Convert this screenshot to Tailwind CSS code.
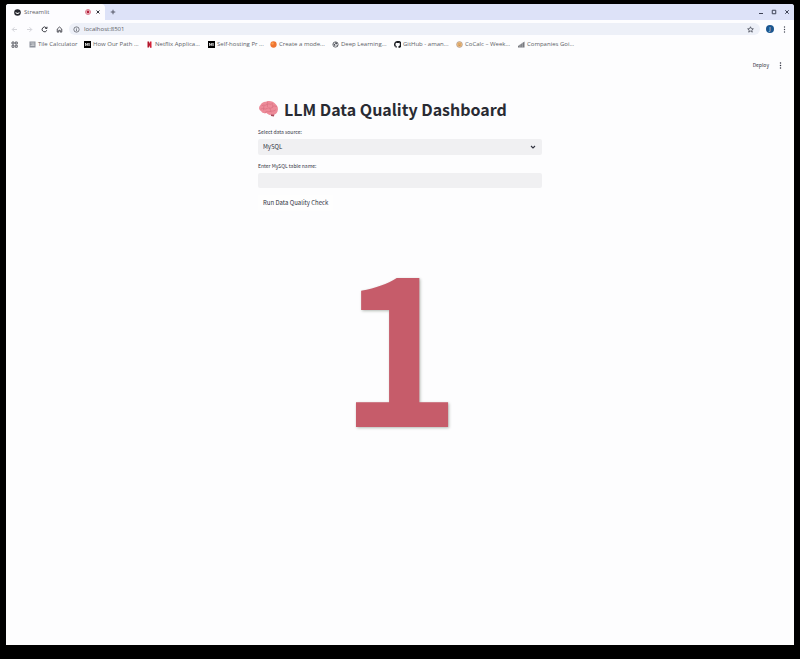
<!DOCTYPE html>
<html lang="en">
<head>
<meta charset="utf-8">
<meta name="viewport" content="width=device-width, initial-scale=1">
<title>Streamlit</title>
<script src="https://cdn.jsdelivr.net/npm/@tailwindcss/browser@4"></script>
</head>
<body class="flex min-h-screen flex-col bg-black px-[6px] pt-1 pb-[14px] font-['Open_Sans','Noto_Sans',sans-serif] text-[6px] leading-[10px] text-[#5c5e66]">
<div class="flex grow flex-col overflow-hidden rounded-t-[3px] bg-[#fdfdfe]">
  <header>
    <div class="flex h-4 items-stretch bg-[#dde2f8]">
      <div class="flex w-[99px] items-center rounded-tr-[4px] bg-[#fdfcff] pr-1 pl-2">
        <svg class="mr-[3px] size-[7px]" viewBox="0 0 14 14"><circle cx="7" cy="7" r="6.600" fill="#25262e"/><path d="M2.500 6.200 7 8l4.500-1.800-1.500 3L7 10 4 9.200z" fill="#fff"/></svg>
        <span class="grow">Streamlit</span>
        <svg class="mr-1 size-[6px]" viewBox="0 0 12 12"><circle cx="6" cy="6" r="5" fill="#fbe3e8" stroke="#d0566c" stroke-width="1.500"/><circle cx="6" cy="6" r="2.800" fill="#b51f3a"/></svg>
        <button aria-label="Close tab"><svg class="size-[6px]" viewBox="0 0 12 12" stroke="#30323a" stroke-width="2"><path d="M3 3l6 6M9 3l-6 6"/></svg></button>
      </div>
      <button class="ml-[5px]" aria-label="New tab"><svg class="size-[6px]" viewBox="0 0 12 12" stroke="#4a4d5c" stroke-width="1.800"><path d="M6 1.500v9M1.500 6h9"/></svg></button>
      <div class="ml-auto flex items-center gap-[7px] pr-1 text-[#3d4254]">
        <button aria-label="Minimize"><svg class="size-[6px]" viewBox="0 0 12 12" stroke="currentColor" stroke-width="2"><path d="M2 9h8"/></svg></button>
        <button aria-label="Maximize"><svg class="size-[6px]" viewBox="0 0 12 12" fill="none" stroke="currentColor" stroke-width="2"><path d="M2.500 2.500h7v7h-7z"/></svg></button>
        <button aria-label="Close"><svg class="size-[6px]" viewBox="0 0 12 12" stroke="currentColor" stroke-width="2"><path d="M2.500 2.500l7 7M9.500 2.500l-7 7"/></svg></button>
      </div>
    </div>
    <div class="flex h-[18px] items-center bg-[#fdfdff] pr-[6px] pl-[5px]">
      <div class="flex gap-2">
        <button aria-label="Back"><svg class="size-[7px]" viewBox="0 0 14 14" fill="none" stroke="#c9cad0" stroke-width="1.600"><path d="M12 7H3M7 2.500 2.500 7 7 11.500"/></svg></button>
        <button aria-label="Forward"><svg class="size-[7px]" viewBox="0 0 14 14" fill="none" stroke="#c9cad0" stroke-width="1.600"><path d="M2 7h9M7 2.500 11.500 7 7 11.500"/></svg></button>
        <button aria-label="Reload"><svg class="size-[7px]" viewBox="0 0 14 14" fill="none" stroke="#3f4148" stroke-width="2"><path d="M11.500 8.500A4.800 4.800 0 1 1 10.500 3.600L12 5M12 1.500V5H8.500"/></svg></button>
        <button aria-label="Home"><svg class="size-[7px]" viewBox="0 0 14 14" fill="none" stroke="#3f4148" stroke-width="1.800"><path d="M2.500 6 7 2l4.500 4v6.200H8.500V8.500h-3v3.700h-3z"/></svg></button>
      </div>
      <div class="ml-[6px] flex h-3 grow items-center rounded-full bg-[#edf0f8] pr-[6px] pl-1">
        <svg class="mr-1 size-[7px] shrink-0" viewBox="0 0 14 14" fill="none" stroke="#50535d" stroke-width="1.400"><circle cx="7" cy="7" r="5.300"/><path d="M7 6.300v4M7 3.700v1.400"/></svg>
        <input type="text" value="localhost:8501" aria-label="Address" class="w-10 min-w-0 grow bg-transparent text-[6px] leading-[10px] outline-none">
        <button aria-label="Bookmark this page"><svg class="size-[7px]" viewBox="0 0 14 14" fill="none" stroke="#3f4350" stroke-width="1.500"><path d="M7 1.500 8.600 5.300l4.100.3-3.100 2.700 1 4L7 10.200l-3.600 2.100 1-4L1.300 5.600l4.100-.3z"/></svg></button>
      </div>
      <button class="ml-[6px] flex size-2 items-center justify-center rounded-full bg-[#1c5790] text-[5px] leading-none text-white" aria-label="Profile">J</button>
      <button class="ml-[7px]" aria-label="Menu"><svg class="size-[7px]" viewBox="0 0 14 14" fill="#3f4350"><circle cx="7" cy="2" r="1.400"/><circle cx="7" cy="7" r="1.400"/><circle cx="7" cy="12" r="1.400"/></svg></button>
    </div>
    <nav class="flex h-3 items-center pl-[5px] whitespace-nowrap" aria-label="Bookmarks">
      <button class="mr-[11px]" aria-label="Apps"><svg class="size-[7px]" viewBox="0 0 14 14" fill="none" stroke="#62646c" stroke-width="2"><path d="M2 2h4v4H2zM8.500 2h4v4h-4zM2 8.500h4v4H2zM8.500 8.500h4v4h-4z"/></svg></button>
      <a href="#" class="flex w-[55px] items-center gap-[2px]"><svg class="size-[7px] shrink-0" viewBox="0 0 14 14"><path fill="#8d929b" d="M1 1h12v12H1z"/><path stroke="#fff" d="M3 4h8M5 6.500h6M3 9h8"/></svg>Tile Calculator</a>
      <a href="#" class="flex w-[62px] items-center gap-[2px]"><svg class="size-[7px] shrink-0" viewBox="0 0 14 14"><path d="M0 0h14v14H0z"/><path d="M3 10V4l3 5 2-5v6M10.500 4v6" fill="none" stroke="#fff" stroke-width="1.400"/></svg>How Our Path ...</a>
      <a href="#" class="flex w-[62px] items-center gap-[2px]"><svg class="size-[7px] shrink-0" viewBox="0 0 14 14"><path d="M3 1h3l5 12H8zM3 1h3v12H3z" fill="#b3152b"/><path d="M8 1h3v12H8z" fill="#d32239"/></svg>Netflix Applica...</a>
      <a href="#" class="flex w-[62px] items-center gap-[2px]"><svg class="size-[7px] shrink-0" viewBox="0 0 14 14"><path d="M0 0h14v14H0z"/><path d="M3 10V4l3 5 2-5v6M10.500 4v6" fill="none" stroke="#fff" stroke-width="1.400"/></svg>Self-hosting Pr ...</a>
      <a href="#" class="flex w-[62px] items-center gap-[2px]"><svg class="size-[7px] shrink-0" viewBox="0 0 14 14"><circle cx="7" cy="7" r="6.300" fill="#ef7430"/><circle cx="5" cy="5" r="2.500" fill="#fa9c4c"/></svg>Create a mode...</a>
      <a href="#" class="flex w-[62px] items-center gap-[2px]"><svg class="size-[7px] shrink-0" viewBox="0 0 14 14"><circle cx="7" cy="7" r="5.300" fill="#f4f4f6" stroke="#4d5058" stroke-width="1.600"/><path d="M2 5l4 1 1 3-2 1zM7 2l4 2-2 3-3-2zM9 9l3-1-2 4z" fill="#4d5058"/></svg>Deep Learning...</a>
      <a href="#" class="flex w-[62px] items-center gap-[2px]"><svg class="size-[7px] shrink-0" viewBox="0 0 16 16"><path fill="#17191e" d="M8 0C3.580 0 0 3.580 0 8c0 3.540 2.290 6.530 5.470 7.590.4.070.55-.17.55-.38v-1.490c-2.010.37-2.530-.49-2.690-.94-.36-.92-.85-1.200-1.200-1.350.9-.5 1.700.6 2 1.050.72 1.210 1.870.87 2.330.66.070-.52.28-.87.510-1.070-1.780-.2-3.640-.89-3.640-3.950 0-.87.310-1.590.82-2.150-.08-.2-.36-1.020.08-2.120 0 0 .67-.21 2.200.82a7.600 7.600 0 0 1 4 0c1.530-1.040 2.200-.82 2.200-.82.44 1.100.16 1.920.08 2.120.51.56.82 1.270.82 2.150 0 3.070-1.870 3.750-3.650 3.950.29.25.54.73.54 1.480v2.200c0 .21.15.46.55.38A8 8 0 0 0 8 0z"/></svg>GitHub - aman...</a>
      <a href="#" class="flex w-[62px] items-center gap-[2px]"><svg class="size-[7px] shrink-0" viewBox="0 0 14 14"><circle cx="7" cy="7" r="5.800" fill="#f2c07c" stroke="#9c8e99" stroke-width="1.200"/><path d="M4 6h6M5 9h4" stroke="#b88052" stroke-width="1.400"/></svg>CoCalc – Week...</a>
      <a href="#" class="flex items-center gap-[2px]"><svg class="size-[7px] shrink-0" viewBox="0 0 14 14" fill="#77797f"><path d="M0 13v-3L13 1v12z"/><path d="M4 6v7M8.500 3v10" stroke="#d8d9dc"/></svg>Companies Goi...</a>
    </nav>
  </header>

  <div class="flex grow flex-col font-['Noto_Sans_CJK_SC','Noto_Sans',sans-serif] text-[#31333f]">
    <div class="flex h-[30px] items-center justify-end gap-2 pr-[10px]">
      <button class="text-[5px]">Deploy</button>
      <button aria-label="App menu"><svg class="size-[7px]" viewBox="0 0 14 14" fill="#31333f"><circle cx="7" cy="2" r="1.500"/><circle cx="7" cy="7" r="1.500"/><circle cx="7" cy="12" r="1.500"/></svg></button>
    </div>
    <main class="mx-auto w-full max-w-[284px] pt-[17px]">
      <h1 class="flex items-center gap-[5px] text-[16px] leading-6 font-bold whitespace-nowrap text-[#292b33]">
        <svg class="h-[18px] w-[21px] shrink-0" viewBox="0 0 42 36" role="img" aria-label="Brain"><path d="M25 26h8l-1 7-6-1z" fill="#a84a5c"/><path d="M5 10C8 4 13 4 17 3c7-2 14 0 18 5 5 4 6 10 4 15-2 6-8 7-12 6-4 2-7 0-10-3-5 1-9 0-11-4-5-3-5-8-1-12z" fill="#ed8b99"/><path d="M8 11c4-2 6 1 10-2s6 1 9-1M6 18c5-3 8 2 12-1s8 2 11-3 5 0 8-1M14 25c3-4 7 0 10-2s7 1 11-3M19 4c-2 4 1 5 0 9M29 7c-2 3 2 5 0 8M12 12c-2 3 1 5-1 8M24 17c2 3 0 4 2 7" fill="none" stroke="#d97182" stroke-width="1.500" stroke-linecap="round"/></svg>
        LLM Data Quality Dashboard
      </h1>
      <form>
        <label for="source" class="mt-[6px] block text-[5px] leading-[10px]">Select data source:</label>
        <div class="relative mt-[2px]">
          <select id="source" class="block h-4 w-full appearance-none rounded-[2px] bg-[#f0f0f2] px-[5px] text-[6px] leading-4"><option>MySQL</option></select>
          <svg class="pointer-events-none absolute top-[5px] right-[6px] size-[6px]" viewBox="0 0 12 12" fill="none" stroke="#31333f" stroke-width="2.200"><path d="M2 4l4 4 4-4"/></svg>
        </div>
        <label for="table" class="mt-[6px] block text-[5px] leading-[10px]">Enter MySQL table name:</label>
        <input id="table" type="text" class="mt-[2px] block h-[15px] w-full rounded-[2px] bg-[#f0f0f2] px-[5px] text-[6px] outline-none">
        <button type="button" class="mt-[7px] block h-4 rounded-[2px] bg-[#fefefe] px-[5px] text-[6px] leading-4">Run Data Quality Check</button>
      </form>
      <div class="mt-4 text-center text-[207px] leading-[220px] font-bold text-[#c65c6a] text-shadow-[1px_1px_3px_#b4bab4]">1</div>
    </main>
  </div>
</div>
</body>
</html>
